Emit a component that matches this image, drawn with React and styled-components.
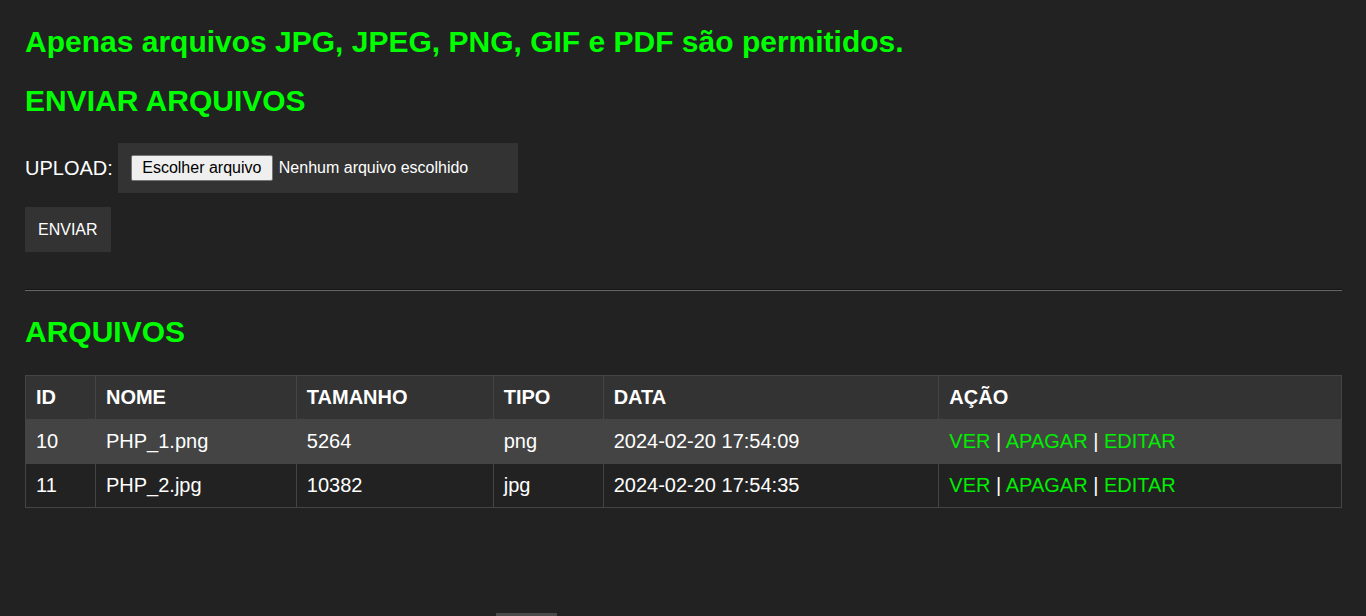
import { styled, createGlobalStyle } from "styled-components";

const files = [
  { id: 10, nome: "PHP_1.png", tamanho: 5264, tipo: "png", data: "2024-02-20 17:54:09" },
  { id: 11, nome: "PHP_2.jpg", tamanho: 10382, tipo: "jpg", data: "2024-02-20 17:54:35" },
];

const columns = [
  { label: "ID", width: 70 },
  { label: "NOME", width: 201 },
  { label: "TAMANHO", width: 197 },
  { label: "TIPO", width: 110 },
  { label: "DATA", width: 336 },
  { label: "AÇÃO", width: 403 },
];

export default function App() {
  return (
    <>
      <GlobalStyle />
      <Page>
        <Title>Apenas arquivos JPG, JPEG, PNG, GIF e PDF são permitidos.</Title>
        <Title $gap>ENVIAR ARQUIVOS</Title>

        <Form onSubmit={(e) => e.preventDefault()}>
          <UploadRow>
            <Label htmlFor="arquivo">UPLOAD:</Label>
            <FileBox htmlFor="arquivo">
              <HiddenInput id="arquivo" type="file" />
              <FileButton>Escolher arquivo</FileButton>
              <FileName>Nenhum arquivo escolhido</FileName>
            </FileBox>
          </UploadRow>
          <SendButton type="submit">ENVIAR</SendButton>
        </Form>

        <Divider />

        <Title>ARQUIVOS</Title>

        <Table>
          <colgroup>
            {columns.map((c) => (
              <col key={c.label} style={{ width: c.width }} />
            ))}
          </colgroup>
          <thead>
            <tr>
              {columns.map((c) => (
                <HeadCell key={c.label}>{c.label}</HeadCell>
              ))}
            </tr>
          </thead>
          <tbody>
            {files.map((f, i) => (
              <Row key={f.id} $odd={i % 2 === 0}>
                <Cell>{f.id}</Cell>
                <Cell>{f.nome}</Cell>
                <Cell>{f.tamanho}</Cell>
                <Cell>{f.tipo}</Cell>
                <Cell>{f.data}</Cell>
                <Cell>
                  <Action href="#">VER</Action> | <Action href="#">APAGAR</Action> |{" "}
                  <Action href="#">EDITAR</Action>
                </Cell>
              </Row>
            ))}
          </tbody>
        </Table>

        <PageTab />
      </Page>
    </>
  );
}

// Styles
const GlobalStyle = createGlobalStyle`
  html, body {
    margin: 0;
    background: #222222;
    overflow: hidden;
  }
  body {
    font-family: "Liberation Sans", Arial, sans-serif;
    color: #ffffff;
  }
`;

const Page = styled.div`
  display: flex;
  flex-direction: column;
  align-items: flex-start;
  padding: 25px 24px 0 25px;
`;

const Title = styled.h1`
  margin: ${(props) => (props.$gap ? "25px 0 0" : "0")};
  font-size: 30px;
  line-height: 34px;
  font-weight: 700;
  color: #00ff00;
`;

const Form = styled.form`
  display: flex;
  flex-direction: column;
  align-items: flex-start;
  gap: 14px;
  margin-top: 25px;
`;

const UploadRow = styled.div`
  display: flex;
  align-items: center;
  gap: 5px;
`;

const Label = styled.label`
  font-size: 20px;
  line-height: 23px;
`;

const FileBox = styled.label`
  display: flex;
  align-items: center;
  gap: 6px;
  box-sizing: border-box;
  width: 400px;
  height: 50px;
  padding: 0 13px;
  background: #333333;
  cursor: pointer;
`;

const HiddenInput = styled.input`
  display: none;
`;

const FileButton = styled.span`
  display: flex;
  align-items: center;
  justify-content: center;
  box-sizing: border-box;
  width: 142px;
  height: 26px;
  background: #efefef;
  border: 1px solid #767676;
  border-radius: 2px;
  color: #000000;
  font-size: 16px;
`;

const FileName = styled.span`
  font-size: 16px;
  color: #ffffff;
`;

const SendButton = styled.button`
  height: 45px;
  padding: 0 13px;
  background: #333333;
  border: none;
  color: #ffffff;
  font-family: "Liberation Sans", Arial, sans-serif;
  font-size: 16px;
  cursor: pointer;
`;

const Divider = styled.hr`
  align-self: stretch;
  margin: 37px 0 24px;
  border: none;
  border-top: 1px solid #151515;
  border-bottom: 1px solid #666666;
`;

const Table = styled.table`
  align-self: stretch;
  margin-top: 26px;
  border-collapse: collapse;
  table-layout: fixed;
  border: 1px solid #444444;
`;

const HeadCell = styled.th`
  padding: 10px;
  background: #333333;
  border: 1px solid #444444;
  text-align: left;
  font-size: 20px;
  line-height: 23px;
  font-weight: 700;
`;

const Row = styled.tr`
  background: ${(props) => (props.$odd ? "#444444" : "#222222")};
`;

const Cell = styled.td`
  padding: 10px;
  border: 1px solid #444444;
  font-size: 20px;
  line-height: 23px;
`;

const Action = styled.a`
  color: #00ee00;
  text-decoration: none;
`;

const PageTab = styled.div`
  width: 61px;
  height: 3px;
  margin: 105px 0 0 471px;
  background: #4a4a4a;
`;
